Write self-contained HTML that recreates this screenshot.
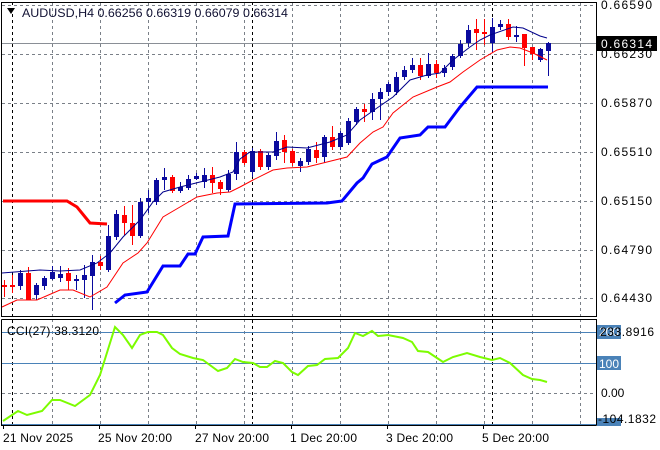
<!DOCTYPE html>
<html><head><meta charset="utf-8"><style>
html,body{margin:0;padding:0;background:#fff;width:660px;height:450px;overflow:hidden}
svg{display:block}
text{font-family:"Liberation Sans","DejaVu Sans",sans-serif;font-size:12px}
</style></head><body>
<svg id="s" width="660" height="450" xmlns="http://www.w3.org/2000/svg">
<rect width="660" height="450" fill="#fff"/>
<g stroke="#7a8088" stroke-width="1" stroke-dasharray="3,3" fill="none">
<path d="M2 5.5H596M2 54.5H596M2 103.5H596M2 152.5H596M2 201.5H596M2 250.5H596M2 298.5H596"/>
<path d="M52.5 2V316M100.5 2V316M148.5 2V316M196.5 2V316M244.5 2V316M292.5 2V316M340.5 2V316M388.5 2V316M436.5 2V316M484.5 2V316M532.5 2V316M580.5 2V316"/>
<path d="M52.5 319V424M100.5 319V424M148.5 319V424M196.5 319V424M244.5 319V424M292.5 319V424M340.5 319V424M388.5 319V424M436.5 319V424M484.5 319V424M532.5 319V424M580.5 319V424"/>
<path d="M2 393.5H596"/>
</g>
<g stroke="#000" stroke-width="1" stroke-dasharray="3,3"><path d="M12.5 2V424M252.5 2V424M492.5 2V424"/></g>
<path d="M2 43.5H596" stroke="#8a8f96" stroke-width="1"/>
<path d="M2 332.5H596M2 363.5H596M2 424.5H596" stroke="#4a82b8" stroke-width="1"/>
<g id="c"></g>
<polyline fill="none" stroke="#f00" stroke-width="3" points="3,201 67,201 77,207 90,223 107,224"/>
<polyline fill="none" stroke="#0000ff" stroke-width="3" points="115,303 125,295 147,292 163,266 180,266 188,254 195,254 203,237 228,236 235,204 327,203 342,201 357,183 363,178 372,164 387,157 400,138 420,135 428,127 445,127 460,107 477,87 548,87"/>
<polyline fill="none" stroke="#f00" stroke-width="1" points="2,307 17,300 37,300 60,290 73,290 90,297 107,287 123,263 138,253 147,243 163,217 180,207 197,197 217,193 230,192 240,187 253,180 273,170 287,168 307,167 327,162 347,157 360,143 373,132 383,127 393,113 413,97 437,87 450,82 463,72 480,60 497,50 510,47 520,48 533,53 547,60"/>
<polyline fill="none" stroke="#00008b" stroke-width="1" points="2,273 40,270 60,271 80,270 97,263 110,253 123,237 140,220 153,202 163,192 180,187 200,182 220,177 233,172 240,159 250,152 273,152 287,147 307,148 330,142 347,135 360,120 377,108 393,97 410,80 427,75 440,73 453,60 470,47 480,40 490,35 513,27 523,28 540,36 547,38"/>
<polyline fill="none" stroke="#7cfc00" stroke-width="2" points="3,421 18,411 27,415 42,411 52,400 60,400 75,406 90,395 100,375 115,327 123,335 132,348 140,335 148,332 157,332 163,335 172,348 180,354 193,358 203,360 218,371 227,368 235,359 243,362 253,363 260,367 267,367 275,361 283,363 292,372 298,375 308,366 317,365 325,359 338,358 348,348 355,333 363,336 372,331 378,336 388,335 403,338 412,342 418,351 428,352 437,358 443,362 453,357 467,353 480,357 492,360 500,358 510,363 523,375 532,379 540,380 547,382"/>
<path d="M1.5 2V316.5H596.5V2M1.5 319.5H596.5V425.5M1.5 319.5V425.5H596.5" fill="none" stroke="#000" stroke-width="1"/>
<path d="M1.5 2.5H596.5" stroke="#000"/>
<path d="M3.5 425V429M99.5 425V429M195.5 425V429M291.5 425V429M387.5 425V429M483.5 425V429M596.5 5V6M596.5 54V55" stroke="#000"/>
<polygon points="7,8 15,8 11,14" fill="#000"/>
<text x="22" y="17" fill="#111133" textLength="266" lengthAdjust="spacingAndGlyphs">AUDUSD,H4  0.66256 0.66319 0.66079 0.66314</text>
<g fill="#000">
<text x="601" y="9" textLength="51">0.66590</text>
<text x="601" y="58" textLength="51">0.66230</text>
<text x="601" y="107" textLength="51">0.65870</text>
<text x="601" y="156" textLength="51">0.65510</text>
<text x="601" y="205" textLength="51">0.65150</text>
<text x="601" y="254" textLength="51">0.64790</text>
<text x="601" y="302" textLength="51">0.64430</text>
</g>
<rect x="597" y="36" width="60" height="15" fill="#000"/>
<text x="601" y="48" fill="#fff" textLength="51">0.66314</text>
<rect x="597" y="325" width="24" height="14" fill="#4a82b8"/>
<text x="599" y="336" fill="#fff">200</text>
<text x="600" y="336" fill="#000" textLength="54">233.8916</text>
<rect x="597" y="356" width="24" height="14" fill="#4a82b8"/>
<text x="599" y="368" fill="#fff">100</text>
<text x="601" y="397" fill="#000">0.00</text>
<rect x="597" y="418" width="24" height="8" fill="#4a82b8"/>
<text x="598" y="423" fill="#000" textLength="58">-104.1832</text>
<text x="7" y="335" fill="#000" textLength="92">CCI(27) 38.3120</text>
<g fill="#000">
<text x="3" y="442" textLength="70">21 Nov 2025</text>
<text x="98" y="442" textLength="74">25 Nov 20:00</text>
<text x="195" y="442" textLength="74">27 Nov 20:00</text>
<text x="290" y="442" textLength="67">1 Dec 20:00</text>
<text x="386" y="442" textLength="67">3 Dec 20:00</text>
<text x="482" y="442" textLength="67">5 Dec 20:00</text>
</g>
</svg>
<script>
var d=[[285,287,280,297,'r'],[285,286,275,293,'r'],[273,286,270,290,'b'],[273,300,267,300,'r'],[285,295,283,300,'b'],[278,286,276,290,'b'],[272,279,266,280,'b'],[274,278,266,282,'b'],[273,281,268,290,'r'],[279,280,275,290,'b'],[275,280,265,298,'b'],[262,276,255,310,'b'],[262,266,256,270,'r'],[236,270,225,272,'b'],[214,237,210,240,'b'],[215,223,206,235,'r'],[223,236,205,245,'r'],[202,236,198,238,'b'],[198,202,190,213,'b'],[180,202,178,205,'b'],[177,180,168,190,'b'],[177,191,175,193,'r'],[187,191,182,193,'b'],[179,188,175,190,'b'],[176,179,173,180,'b'],[175,182,168,188,'b'],[175,183,167,193,'r'],[182,189,180,195,'r'],[174,190,170,192,'b'],[152,174,142,180,'b'],[152,163,150,165,'r'],[151,172,148,177,'b'],[151,167,149,170,'r'],[155,167,153,170,'b'],[141,156,132,160,'b'],[140,152,135,163,'r'],[151,163,149,166,'r'],[161,166,158,172,'b'],[149,162,146,165,'b'],[150,158,142,163,'r'],[137,157,135,163,'b'],[137,147,126,150,'r'],[133,147,131,150,'b'],[121,143,118,145,'b'],[109,122,107,125,'b'],[109,112,104,122,'r'],[99,112,93,120,'b'],[92,99,88,120,'b'],[84,92,82,96,'b'],[77,92,72,95,'b'],[70,77,66,80,'b'],[65,70,58,73,'b'],[65,76,58,80,'r'],[64,76,53,78,'b'],[64,73,60,78,'r'],[68,73,65,77,'b'],[56,67,54,70,'b'],[44,56,40,58,'b'],[30,43,25,47,'b'],[29,33,19,50,'r'],[32,34,19,45,'r'],[27,43,18,52,'b'],[24,27,20,30,'b'],[24,37,19,40,'r'],[35,36,26,42,'b'],[34,48,34,66,'r'],[47,54,48,60,'r'],[49,60,48,62,'b'],[43,51,42,76,'b']];
var g=document.getElementById('c'),h='';
d.forEach(function(c,i){var x=4+8*i,col=c[4]=='r'?'#ff0000':'#0a0a9e';
h+='<rect x="'+x+'" y="'+c[2]+'" width="1" height="'+(c[3]-c[2])+'" fill="'+col+'"/>';
h+='<rect x="'+(x-2)+'" y="'+c[0]+'" width="5" height="'+Math.max(2,c[1]-c[0])+'" fill="'+col+'"/>';});
g.innerHTML=h;
</script>
</body></html>
